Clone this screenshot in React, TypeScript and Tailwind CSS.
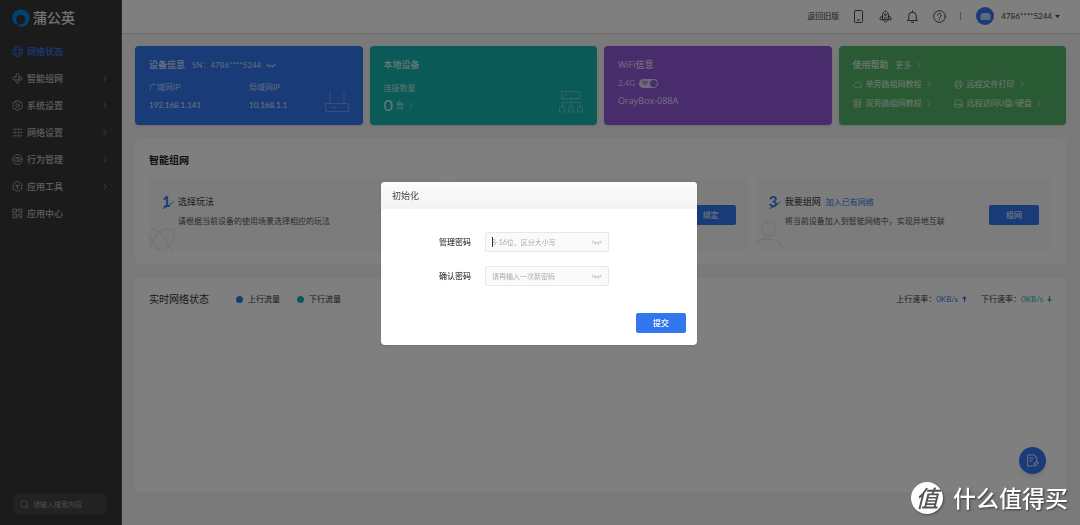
import type { ReactNode } from "react";

const stroke = {
  fill: "none",
  stroke: "currentColor",
  strokeLinecap: "round" as const,
  strokeLinejoin: "round" as const,
};

function Chevron({ className = "" }: { className?: string }) {
  return (
    <svg viewBox="0 0 6 10" className={`h-[7px] w-1 shrink-0 ${className}`} {...stroke} strokeWidth={1.2}>
      <path d="M1 1l4 4-4 4" />
    </svg>
  );
}

function ClosedEye({ className = "" }: { className?: string }) {
  return (
    <svg viewBox="0 0 20 10" className={`h-[5px] w-[10px] ${className}`} {...stroke} strokeWidth={1.7}>
      <path d="M1 1.5c4 6 14 6 18 0M2.8 4L1 6.5M7.5 6L6.8 9M12.5 6l.7 3M17.2 4L19 6.5" />
    </svg>
  );
}

const navIcons: Record<string, ReactNode> = {
  globe: (
    <>
      <circle cx="10" cy="10" r="9" />
      <ellipse cx="10" cy="10" rx="4.2" ry="9" />
      <path d="M2 6.8h16M2 13.2h16" />
    </>
  ),
  mesh: (
    <path d="M7.3 7.3V4.2a2.7 2.7 0 0 1 5.4 0v11.6a2.7 2.7 0 0 1-5.4 0v-3.1M12.7 7.3h3.1a2.7 2.7 0 0 1 0 5.4H4.2a2.7 2.7 0 0 1 0-5.4h3.1" />
  ),
  gear: (
    <>
      <path d="M7.5 1.5h5l1.2 2.6 2.9-.3 2.5 4.2-1.7 2 1.7 2-2.5 4.2-2.9-.3-1.2 2.6h-5l-1.2-2.6-2.9.3L.9 12l1.700-2L.9 8l2.500-4.200 2.900.3z" />
      <circle cx="10" cy="10" r="3" />
    </>
  ),
  sliders: <path d="M2 4h7M14 4h4M12 2v4M2 10h2M9 10h9M6 8v4M2 16h7M14 16h4M12 14v4" />,
  control: (
    <>
      <circle cx="10" cy="10" r="9" />
      <rect x="4.5" y="6.8" width="11" height="6.4" rx="3.2" />
      <path d="M11 7v6" />
    </>
  ),
  tools: (
    <>
      <path d="M10 1l7.8 4.5v9L10 19l-7.8-4.5v-9z" />
      <path d="M7 8l3 2.5L13 8M10 10.5V14M7 8h6" />
    </>
  ),
  apps: (
    <>
      <path d="M2 2h6.5v6.5H2zM2 11.5h6.5V18H2zM11.5 2H18v6.5h-3.2V5.2h-3.3zM11.5 11.5H18V18h-3.2v-3.2h-3.3z" />
      <path d="M5.2 5v1M5.2 14.5v1" />
    </>
  ),
};

const navItems = [
  { label: "网络状态", icon: "globe", active: true, more: false },
  { label: "智能组网", icon: "mesh", active: false, more: true },
  { label: "系统设置", icon: "gear", active: false, more: true },
  { label: "网络设置", icon: "sliders", active: false, more: true },
  { label: "行为管理", icon: "control", active: false, more: true },
  { label: "应用工具", icon: "tools", active: false, more: true },
  { label: "应用中心", icon: "apps", active: false, more: false },
];

function Sidebar() {
  return (
    <aside className="flex w-[122px] shrink-0 flex-col border-r border-[#555] bg-[#363636] text-[#bdbdbd]">
      <div className="flex h-[38px] items-center gap-[3px] pb-[2px] pl-3">
        <svg viewBox="0 0 19 19" className="size-[18px]" aria-hidden="true">
          <circle cx="9.5" cy="9.5" r="9.2" fill="#0085e0" />
          <path d="M4.6 17.6c1.6-1.6 1.3-2.6.5-3.8a5 5 0 1 1 5 2.2c-1 .3-2-.1-2.7-.5.2 1.2-.2 2.3-.9 3.3z" fill="#363636" />
        </svg>
        <span className="text-[14px] leading-none font-medium text-[#e6e6e6]">蒲公英</span>
      </div>
      <nav className="flex flex-col">
        {navItems.map((item) => (
          <a
            key={item.label}
            href="#"
            className={`flex h-[27px] items-center pr-[14px] pl-3 text-[9px] font-medium ${item.active ? "text-[#3377ee]" : ""}`}
          >
            <svg viewBox="0 0 20 20" className="mr-1 size-[11px]" {...stroke} strokeWidth={1.3}>
              {navIcons[item.icon]}
            </svg>
            <span className="flex-1">{item.label}</span>
            {item.more && <Chevron className="text-[#999]" />}
          </a>
        ))}
      </nav>
      <label className="mt-auto mr-[15px] mb-[11px] ml-[14px] flex h-5 items-center gap-1 rounded-xs bg-[#454545] px-[6px]">
        <svg viewBox="0 0 20 20" className="size-[9px] shrink-0 text-[#999]" {...stroke} strokeWidth={1.5}>
          <circle cx="9" cy="9" r="7.5" />
          <path d="M14.5 14.5L19 19" />
        </svg>
        <input
          type="text"
          aria-label="搜索"
          placeholder="请输入搜索内容"
          className="w-full min-w-0 bg-transparent text-[7px] outline-none placeholder:text-[#999]"
        />
      </label>
    </aside>
  );
}

function HeaderButton({ label, children }: { label: string; children: ReactNode }) {
  return (
    <button type="button" aria-label={label} className="flex w-[27px] justify-center">
      <svg viewBox="0 0 24 24" className="size-[13px]" {...stroke} strokeWidth={1.8}>
        {children}
      </svg>
    </button>
  );
}

function Header() {
  return (
    <header className="flex h-[33px] shrink-0 items-center justify-end bg-white pr-5 pb-px text-[8px] text-[#444] shadow-[0_1px_2px_#0000001f]">
      <a href="#" className="mr-[6px]">
        返回旧版
      </a>
      <HeaderButton label="手机">
        <rect x="4.5" y="1" width="15" height="22" rx="2" />
        <path d="M10 18.5h4" />
      </HeaderButton>
      <HeaderButton label="助手">
        <path d="M6.5 16.5V10C6.5 6 9 3 12 1.5 15 3 17.5 6 17.5 10v6.5zM6.5 10.5L2 14v4h20v-4l-4.5-3.5M9 20.5c1.5 2 4.5 2 6 0M9.5 13.5c1.5 1 3.5 1 5 0" />
        <circle cx="12" cy="8.5" r="1.8" />
      </HeaderButton>
      <HeaderButton label="通知">
        <path d="M2.5 19.5h19M5 19.5V11a7 7 0 0 1 14 0v8.5M12 4V1.5M10 22.7h4" />
      </HeaderButton>
      <HeaderButton label="帮助">
        <circle cx="12" cy="12" r="10.8" />
        <path d="M8.7 9.5a3.3 3.3 0 1 1 5 2.8c-1.2.7-1.7 1.2-1.7 2.5M12 17.8v.2" />
      </HeaderButton>
      <span className="mr-[15px] ml-[7px] h-2 w-px bg-[#aaa]" />
      <button type="button" className="flex items-center gap-[7px]">
        <span className="flex size-[18px] items-center justify-center rounded-full bg-[#3377ee]">
          <svg viewBox="0 0 20 14" className="h-[7px] w-[11px]">
            <path d="M3.5 0h13L20 4.5V12a2 2 0 0 1-2 2H2a2 2 0 0 1-2-2V4.5z" fill="#bcd3fb" />
            <path d="M14 9.5h2" stroke="#7fa8f5" strokeWidth="1.2" />
          </svg>
        </span>
        <span>4786****5244</span>
        <svg viewBox="0 0 8 5" className="-ml-1 h-[3px] w-[5px]">
          <path d="M0 0h8L4 5z" fill="#444" />
        </svg>
      </button>
    </header>
  );
}

function DeviceCard() {
  return (
    <section className="flex h-[79px] justify-between rounded-[4px] bg-[#3377ee] px-[14px] pt-[13px] text-white/80 shadow-sm">
      <div>
        <div className="flex h-3 items-center gap-[7px]">
          <h2 className="text-[9px] font-medium">设备信息</h2>
          <span className="text-[8px] text-white/70">SN：4786****5244</span>
          <button type="button" aria-label="显示序列号" className="-ml-[2px]">
            <ClosedEye />
          </button>
        </div>
        <dl className="mt-[10px] grid grid-cols-[100px_auto] text-[8px] leading-3">
          <div>
            <dt className="text-white/70">广域网IP</dt>
            <dd className="mt-[6px]">192.168.1.141</dd>
          </div>
          <div>
            <dt className="text-white/70">局域网IP</dt>
            <dd className="mt-[6px]">10.168.1.1</dd>
          </div>
        </dl>
      </div>
      <svg viewBox="0 0 24 22" className="mb-3 h-[22px] w-6 self-end text-white/30" {...stroke} strokeWidth={1.1}>
        <rect x=".6" y="12.5" width="22.8" height="8" rx="1" />
        <path d="M5 12.5V1M19 12.5V1M6 16.5h4.5M16 16.5h1" />
      </svg>
    </section>
  );
}

function LocalCard() {
  return (
    <section className="flex h-[79px] justify-between rounded-[4px] bg-[#14b4b0] px-[14px] pt-[13px] text-white/80 shadow-sm">
      <div>
        <h2 className="text-[9px] leading-3 font-medium">本地设备</h2>
        <p className="mt-[11px] text-[8px] leading-3 text-white/70">连接数量</p>
        <a href="#" className="mt-[5px] flex h-3 items-center gap-[3px]">
          <span className="text-[16px] leading-3">0</span>
          <span className="text-[8px]">台</span>
          <Chevron className="ml-[2px] text-white/60" />
        </a>
      </div>
      <svg viewBox="0 0 24 22" className="mb-3 h-[22px] w-6 self-end text-white/30" {...stroke} strokeWidth={1.1}>
        <path d="M2.7.6h18.6v7H2.7zM5.5 4h2M12 7.6v8M3.2 15.5v-4h17.6v4" />
        <path d="M.6 16h5v5h-5zM9.5 16h5v5h-5zM18.4 16h5v5h-5z" />
      </svg>
    </section>
  );
}

function WifiCard() {
  return (
    <section className="h-[79px] rounded-[4px] bg-[#9058d8] px-[14px] pt-[13px] text-white/80 shadow-sm">
      <h2 className="font-['Open_Sans','Noto_Sans_CJK_SC',sans-serif] text-[9px] leading-3 font-medium">WiFi信息</h2>
      <label className="mt-[6px] flex h-3 items-center gap-1 text-[8px] text-white/70">
        2.4G
        <input type="checkbox" defaultChecked className="peer sr-only" />
        <span className="flex h-[9px] w-[19px] items-center justify-between rounded-full bg-white/75 pr-[1px] pl-[2px]">
          <svg viewBox="0 0 10 8" className="h-[6px] w-2">
            <path d="M0 2.5a7.5 7.5 0 0 1 10 0L5 8z" fill="#b79adf" />
          </svg>
          <span className="size-[7px] rounded-full bg-[#9058d8]" />
        </span>
      </label>
      <p className="mt-[6px] font-['Open_Sans',sans-serif] text-[9px] leading-3">OrayBox-088A</p>
    </section>
  );
}

const helpLinks = [
  {
    label: "单旁路组网教程",
    icon: <path d="M6 17a4.5 4.5 0 0 1-.8-8.9 5.5 5.5 0 0 1 10.5-.6A4.8 4.8 0 0 1 15.2 17z" />,
  },
  {
    label: "远程文件打印",
    icon: <path d="M5.5 6V2h9v4M5 14H2V6h16v8h-3M5.5 11h9v7h-9z" />,
  },
  {
    label: "双旁路组网教程",
    icon: <path d="M3 2h14v16H3zM3 7.3h14M3 12.7h14M7 2v16M12 10h2M12 15.5h2" />,
  },
  {
    label: "远程访问U盘/硬盘",
    icon: <path d="M4 2h12l2 10v6H2v-6zM2 12h16M13 15h2" />,
  },
];

function HelpCard() {
  return (
    <section className="h-[79px] rounded-[4px] bg-[#55b469] px-[14px] pt-[13px] text-white/80 shadow-sm">
      <div className="flex h-3 items-center gap-[7px]">
        <h2 className="text-[9px] font-medium">使用帮助</h2>
        <a href="#" className="flex items-center gap-[5px] text-[8px] text-white/70">
          更多
          <Chevron className="text-white/60" />
        </a>
      </div>
      <ul className="mt-[7px] grid grid-cols-[101px_auto] gap-y-[7px] text-[8px] leading-3">
        {helpLinks.map((link) => (
          <li key={link.label}>
            <a href="#" className="flex items-center whitespace-nowrap">
              <svg viewBox="0 0 20 20" className="mr-1 size-[9px] text-white/70" {...stroke} strokeWidth={1.6}>
                {link.icon}
              </svg>
              {link.label}
              <Chevron className="ml-[5px] text-white/60" />
            </a>
          </li>
        ))}
      </ul>
    </section>
  );
}

function StepNumber({ value }: { value: string }) {
  return (
    <span className="relative flex h-[14px] w-4 shrink-0 justify-start text-[#3377ee]">
      <span className="text-[15px] leading-[13px] font-bold">{value}</span>
      <svg viewBox="0 0 12 8" className="absolute bottom-0 left-0 h-2 w-3" {...stroke} strokeWidth={1}>
        <path d="M1 7.3C4 6.5 8 4 11.3 1" />
      </svg>
    </span>
  );
}

type StepProps = {
  value: string;
  title: string;
  link?: string;
  text: string;
  action?: string;
  art: ReactNode;
};

function StepCard({ value, title, link, text, action, art }: StepProps) {
  return (
    <article className="relative flex h-[73px] items-center justify-between overflow-hidden rounded-[3px] bg-[#f8f8fa] px-[13px]">
      <svg
        viewBox="0 0 28 32"
        className="absolute bottom-0 left-0 h-8 w-7 text-[#dde5f4]"
        {...stroke}
        strokeWidth={1.2}
      >
        {art}
      </svg>
      <div className="flex self-start pt-[17px]">
        <StepNumber value={value} />
        <div>
          <div className="flex h-[14px] items-center gap-[5px]">
            <h3 className="text-[9px] text-[#333]">{title}</h3>
            {link && (
              <a href="#" className="text-[8px] text-[#3377ee]">
                {link}
              </a>
            )}
          </div>
          <p className="mt-[6px] text-[8px] leading-3 text-[#555]">{text}</p>
        </div>
      </div>
      {action && (
        <button type="button" className="h-5 w-[50px] shrink-0 rounded-xs bg-[#3377ee] text-[8px] text-white">
          {action}
        </button>
      )}
    </article>
  );
}

function NetworkPanel() {
  return (
    <section className="rounded-[4px] bg-white px-[14px] pt-[14px] pb-[13px]">
      <h2 className="text-[10px] leading-[14px] font-bold text-[#222]">智能组网</h2>
      <div className="mt-[11px] grid grid-cols-3 gap-[7px]">
        <StepCard
          value="1"
          title="选择玩法"
          text="请根据当前设备的使用场景选择相应的玩法"
          art={
            <>
              <path d="M0 11c6-4 18 8 23 21M21 10c8-1 5 14-6 22M15 10C9 13 4 20 1 29M0 16c2 6 6 12 11 16" />
              <circle cx="18.5" cy="10.5" r="1" />
            </>
          }
        />
        <StepCard
          value="2"
          title="绑定设备"
          text="将设备绑定到贝锐账号，便于远程管理"
          action="绑定"
          art={<path d="M0 16h20v16M5 16v-6h10v6" />}
        />
        <StepCard
          value="3"
          title="我要组网"
          link="加入已有网络"
          text="将当前设备加入到智能网络中，实现异地互联"
          action="组网"
          art={
            <>
              <circle cx="12.5" cy="10" r="6.8" />
              <path d="M0 23c8-5 28-4 26 9" />
            </>
          }
        />
      </div>
    </section>
  );
}

function Rate({ label, up }: { label: string; up: boolean }) {
  return (
    <span className="flex items-center">
      {label}
      <span className={up ? "text-[#3377ee]" : "text-[#14b4b0]"}>0KB/s</span>
      <svg
        viewBox="0 0 10 12"
        className={up ? "ml-1 h-[6px] w-[5px] text-[#3377ee]" : "ml-1 h-[6px] w-[5px] rotate-180 text-[#14b4b0]"}
      >
        <path d="M5 0l5 5.5H6.2V12H3.8V5.5H0z" fill="currentColor" />
      </svg>
    </span>
  );
}

function TrafficPanel() {
  return (
    <section className="flex-1 rounded-[4px] bg-white px-[14px] pt-[14px]">
      <div className="flex h-[14px] items-center text-[8px] text-[#333]">
        <h2 className="mr-[27px] text-[10px]">实时网络状态</h2>
        <span className="mr-[17px] flex items-center gap-[5px]">
          <i className="size-[7px] rounded-full bg-[#3377ee]" />
          上行流量
        </span>
        <span className="flex items-center gap-[5px]">
          <i className="size-[7px] rounded-full bg-[#14b4b0]" />
          下行流量
        </span>
        <div className="ml-auto flex gap-[14px]">
          <Rate label="上行速率：" up />
          <Rate label="下行速率：" up={false} />
        </div>
      </div>
    </section>
  );
}

type PasswordRowProps = { id: string; label: string; placeholder: string; focused?: boolean };

function PasswordRow({ id, label, placeholder, focused }: PasswordRowProps) {
  return (
    <div className="flex h-5 items-center gap-[14px]">
      <label htmlFor={id} className="w-[90px] text-right text-[8px] font-medium text-[#444]">
        {label}
      </label>
      <div className="relative flex h-5 w-[124px] items-center rounded-xs border border-[#e8e8e8] bg-[#fafafa] px-[6px]">
        <input
          id={id}
          type="password"
          placeholder={placeholder}
          className="min-w-0 flex-1 bg-transparent text-[7px] outline-none placeholder:text-[#aaa]"
        />
        {focused && <span className="absolute left-[6px] h-[10px] w-px bg-[#333]" />}
        <button type="button" aria-label={`显示${label}`} className="text-[#b8b8b8]">
          <ClosedEye />
        </button>
      </div>
    </div>
  );
}

function InitDialog() {
  return (
    <div className="fixed inset-0 flex items-center justify-center bg-black/50 pt-0.5 pr-0.5">
      <form
        role="dialog"
        aria-labelledby="init-title"
        className="w-[316px] overflow-hidden rounded-[4px] bg-white shadow-sm"
        onSubmit={(e) => e.preventDefault()}
      >
        <h2
          id="init-title"
          className="flex h-[27px] items-center bg-linear-to-b from-[#fcfcfc] to-[#f3f3f3] px-[11px] text-[9px] text-[#444]"
        >
          初始化
        </h2>
        <div className="flex flex-col gap-[14px] pt-[23px]">
          <PasswordRow id="pwd" label="管理密码" placeholder="8-16位，区分大小写" focused />
          <PasswordRow id="pwd2" label="确认密码" placeholder="请再输入一次新密码" />
        </div>
        <div className="flex justify-end px-[11px] pt-[27px] pb-3">
          <button type="submit" className="h-5 w-[50px] rounded-xs bg-[#3377ee] text-[8px] font-medium text-white">
            提交
          </button>
        </div>
      </form>
    </div>
  );
}

function Watermark() {
  return (
    <div className="fixed right-3 bottom-[11px] flex items-center gap-[10px] text-white">
      <span className="flex size-8 items-center justify-center rounded-full bg-white text-[23px] leading-none font-medium text-[#555] italic shadow-[1px_1px_2px_#0006]">
        值
      </span>
      <span className="text-[23px] leading-none font-medium [text-shadow:1px_1px_2px_#0008]">什么值得买</span>
    </div>
  );
}

export default function App() {
  return (
    <div className="flex min-h-screen bg-[#f4f4f6] font-['Lato','Noto_Sans_CJK_SC',sans-serif] leading-normal">
      <Sidebar />
      <div className="flex min-w-0 flex-1 flex-col">
        <Header />
        <main className="flex flex-1 flex-col gap-[14px] pt-[13px] pr-[14px] pb-[33px] pl-[13px]">
          <div className="grid grid-cols-4 gap-[7px]">
            <DeviceCard />
            <LocalCard />
            <WifiCard />
            <HelpCard />
          </div>
          <NetworkPanel />
          <TrafficPanel />
        </main>
      </div>
      <button
        type="button"
        aria-label="反馈"
        className="fixed right-[34px] bottom-[51px] flex size-[27px] items-center justify-center rounded-full bg-[#3377ee] text-white/80 shadow-md"
      >
        <svg viewBox="0 0 24 24" className="size-[13px]" {...stroke} strokeWidth={1.9}>
          <path d="M11 22H3V2h12l5 5v5M7 8h6M7 13h4M14 22l.5-3.5 5-5 3 3-5 5z" />
        </svg>
      </button>
      <InitDialog />
      <Watermark />
    </div>
  );
}
